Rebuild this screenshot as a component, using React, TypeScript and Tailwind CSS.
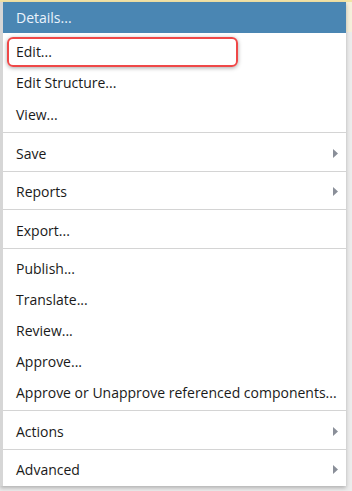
import React from 'react';

type Item = { label: string; sub?: boolean; h?: string };

const sections: Item[][] = [
  [
    { label: 'Details...' },
    { label: 'Edit...', h: 'h-[32px] mt-[2px]' },
    { label: 'Edit Structure...' },
    { label: 'View...', h: 'h-[32px]' },
  ],
  [{ label: 'Save', sub: true }],
  [{ label: 'Reports', sub: true }],
  [{ label: 'Export...' }],
  [
    { label: 'Publish...' },
    { label: 'Translate...' },
    { label: 'Review...' },
    { label: 'Approve...' },
    { label: 'Approve or Unapprove referenced components...' },
  ],
  [{ label: 'Actions', sub: true }],
  [{ label: 'Advanced', sub: true }],
];

function Arrow() {
  return (
    <svg width="5" height="9" viewBox="0 0 5 9" className="shrink-0">
      <path d="M0 0 L5 4.5 L0 9 Z" fill="#8a8f99" />
    </svg>
  );
}

export default function App() {
  return (
    <div className="relative w-[352px] h-[491px] overflow-hidden bg-[#ececec] font-['Open_Sans',sans-serif]">
      {/* page behind the menu */}
      <div className="h-[2px] bg-[#f3e3a6]" />
      <div className="absolute right-0 top-[2px] w-[6px] h-[30px] bg-[#f5f0dc]" />

      {/* Menu */}
      <div className="absolute left-0 top-[2px] w-[346px] h-[484px] bg-white border-l-[3px] border-[#d6d6d6] shadow-[0_2px_4px_rgba(0,0,0,0.25)] flex flex-col">
        {sections.map((sec, si) => (
          <div key={si} className="flex flex-col">
            {si > 0 && <div className="h-px bg-[#d4d4d4] mt-[2px] mb-[4.5px]" />}
            {sec.map((it) => {
              const active = it.label === 'Details...';
              return (
                <div
                  key={it.label}
                  className={`${it.h ?? 'h-[31px]'} flex items-center justify-between pl-[13px] pr-[8px] text-[14px] ${
                    active ? 'bg-[#4a86b3] text-[#eaf3fc]' : 'text-[#1a1a1a]'
                  }`}
                >
                  <span className="whitespace-nowrap">{it.label}</span>
                  {it.sub && <Arrow />}
                </div>
              );
            })}
          </div>
        ))}
      </div>

      {/* annotation box */}
      <div className="absolute left-[7px] top-[37px] w-[231px] h-[30px] rounded-[6px] border-[2.5px] border-[#ef4848] shadow-[0_1px_4px_rgba(0,0,0,0.35)]" />
    </div>
  );
}
